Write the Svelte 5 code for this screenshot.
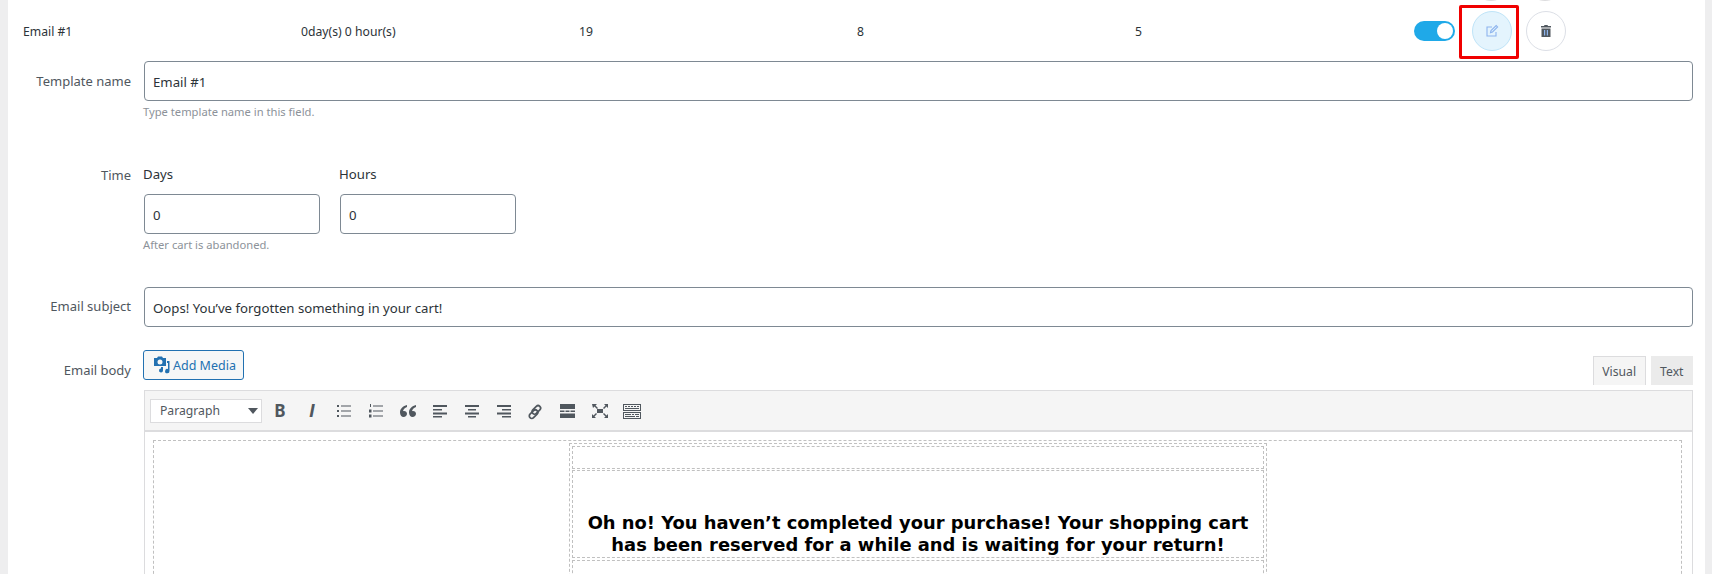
<script>
  const columns = ['Email #1', '0day(s) 0 hour(s)', '19', '8', '5'];
  const lists = [
    'M3 4h2v2H3zM7 4.500h10v1H7zM3 9h2v2H3zM7 9.500h10v1H7zM3 14h2v2H3zM7 14.500h10v1H7z',
    'M4 3h1v3H4zM7 4.500h10v1H7zM3 8.500h2.500v3H3zM7 9.500h10v1H7zM3 13.500h2.500v3H3zM7 14.500h10v1H7z'
  ];
  const aligns = [
    'M3 4h14v2H3zM3 8h9v1.500H3zM3 11.500h14v2H3zM3 15h9v1.500H3z',
    'M3 4h14v2H3zM6 8h8v1.500H6zM3 11.500h14v2H3zM6 15h8v1.500H6z',
    'M3 4h14v2H3zM8 8h9v1.500H8zM3 11.500h14v2H3zM8 15h9v1.500H8z'
  ];
</script>

<div class="page">
  <div class="prev left"></div>
  <div class="prev right"></div>

  <div class="row-head">
    {#each columns as col}
      <span>{col}</span>
    {/each}
    <div class="actions">
      <span class="toggle"><i></i></span>
      <span class="round edit">
        <svg viewBox="0 0 14 14" width="14" height="14" fill="none" stroke="#8db4ee" stroke-width="1.100">
          <path d="M11 8v4H2V3h5" />
          <path d="M5.500 8.600 6 6.600 11.200 1.500l1.400 1.400L7.500 8z" />
        </svg>
        <span class="marker"></span>
      </span>
      <span class="round">
        <svg viewBox="0 0 14 14" width="14" height="14">
          <path fill="#50575e" d="M5.500 1h3l.5 1h3v1.500H2V2h3zM2.500 4.500h9V13h-9z" />
          <path fill="#8db4ee" d="M5 6h1.200v5.500H5zM7.800 6H9v5.500H7.800z" />
        </svg>
      </span>
    </div>
  </div>

  <div class="field name">
    <label for="tpl">Template name</label>
    <div class="grow">
      <input id="tpl" class="box" value="Email #1" />
      <p class="hint">Type template name in this field.</p>
    </div>
  </div>

  <div class="field time">
    <span class="lbl">Time</span>
    <div>
      <div class="pair">
        <div class="unit">
          <span class="cap">Days</span>
          <input class="box" value="0" />
        </div>
        <div class="unit">
          <span class="cap">Hours</span>
          <input class="box" value="0" />
        </div>
      </div>
      <p class="hint">After cart is abandoned.</p>
    </div>
  </div>

  <div class="field subject">
    <label for="subj">Email subject</label>
    <div class="grow">
      <input id="subj" class="box" value="Oops! You’ve forgotten something in your cart!" />
    </div>
  </div>

  <div class="field body">
    <span class="lbl">Email body</span>
    <div class="grow">
      <div class="editor-top">
        <button class="media">
          <svg viewBox="0 0 18 18" width="18" height="18" fill="#2271b1">
            <path d="M1 2h3l1-1.500h4L10 2h3v8H1zm6 1.500a2.500 2.500 0 1 0 0 5 2.500 2.500 0 0 0 0-5z" />
            <path d="M14 5h2.500v10a2.200 2.200 0 1 1-1.500-2V7h-1zM8 11h2v3.500a2 2 0 1 1-1.500-2H8z" />
          </svg>
          Add Media
        </button>
        <div class="tabs">
          <span class="tab on">Visual</span>
          <span class="tab">Text</span>
        </div>
      </div>
      <div class="toolbar">
        <span class="select">Paragraph<i></i></span>
        <span class="tool bold">B</span>
        <span class="tool ital">I</span>
        {#each lists as d}
          <span class="tool"><svg viewBox="0 0 20 20" width="20" height="20" fill="#50575e"><path {d} /></svg></span>
        {/each}
        <span class="tool"><svg viewBox="0 0 20 20" width="20" height="20" fill="#50575e"><path d="M9 4C5 5 2 7.500 2 11.500 2 14 3.500 16 5.500 16S9 14.500 9 12.800 7.800 10 6 10c-.5 0-.8 0-1 .2C5.200 8.500 6.800 6.800 9 6zM18 4c-4 1-7 3.500-7 7.500 0 2.500 1.500 4.500 3.500 4.500s3.500-1.500 3.500-3.200-1.200-2.800-3-2.800c-.5 0-.8 0-1 .2.200-1.700 1.800-3.400 4-4.200z" /></svg></span>
        {#each aligns as d}
          <span class="tool"><svg viewBox="0 0 20 20" width="20" height="20" fill="#50575e"><path {d} /></svg></span>
        {/each}
        <span class="tool"><svg viewBox="0 0 20 20" width="20" height="20" fill="none" stroke="#50575e" stroke-width="1.700"><rect x="1.500" y="7.500" width="10" height="5" rx="2.500" transform="rotate(-45 6.500 10) translate(-1.500 3)" /><rect x="8.500" y="7.500" width="10" height="5" rx="2.500" transform="rotate(-45 13.500 10) translate(-1.500 -3)" /></svg></span>
        <span class="tool"><svg viewBox="0 0 20 20" width="20" height="20" fill="#50575e"><path d="M2 3h15v5H2zM2 9.500h4.500v1.500H2zM7.500 9.500h4v1.500h-4zM12.500 9.500H17v1.500h-4.500zM2 12.500h15V17H2z" /></svg></span>
        <span class="tool"><svg viewBox="0 0 20 20" width="20" height="20" fill="#50575e"><path d="M2 3h5L5.500 4.500 8 7 7 8 4.500 5.500 3 7zM18 3v4l-1.500-1.500L14 8l-1-1 2.500-2.500L14 3zM2 17v-4l1.500 1.500L6 12l1 1-2.500 2.500L6 17zM18 17h-4l1.500-1.500L13 13l1-1 2.500 2.500L18 13zM7 8h6v4H7z" /></svg></span>
        <span class="tool"><svg viewBox="0 0 20 20" width="20" height="20" fill="#50575e"><path d="M1 3h18v7H1zm1 1v5h16V4zM1 11h18v7H1zm1 1v5h16v-5zM3 5h2v1H3zM6 5h2v1H6zM9 5h2v1H9zM12 5h2v1h-2zM15 5h2v1h-2zM3 7h14v1H3zM3 13h6v1H3zM10 13h2v1h-2zM13 13h4v1h-4zM3 15h10v1H3zM14 15h3v1h-3z" /></svg></span>
      </div>
      <div class="content">
        <div class="outer">
          <div class="inner">
            <div class="cell blank"></div>
            <div class="cell msg">
              Oh no! You haven’t completed your purchase! Your shopping cart<br />has been reserved for a while and is waiting for your return!
            </div>
            <div class="cell rest"></div>
          </div>
        </div>
      </div>
    </div>
  </div>
</div>

<style>
  :global(body) {
    margin: 0;
    background: #eeeeef;
    overflow: hidden;
  }

  .page {
    position: relative;
    height: 574px;
    margin: 0 7px 0 8px;
    background: #fff;
    overflow: hidden;
    font-family: "Noto Sans", sans-serif;
    font-size: 13.200px;
    color: #2c3338;
  }

  .prev {
    position: absolute;
    top: -39px;
    width: 38px;
    height: 38px;
    border: 1px solid #dcdcde;
    border-radius: 50%;
  }
  .prev.left { left: 1463px; }
  .prev.right { left: 1517px; }

  .row-head {
    display: flex;
    align-items: center;
    height: 61px;
    padding: 0 0 0 15px;
  }
  .row-head > span {
    width: 278px;
    flex: none;
    padding-top: 2px;
    font-size: 12.200px;
  }

  .actions {
    display: flex;
    align-items: center;
    margin-left: 1px;
  }

  .toggle {
    display: flex;
    justify-content: flex-end;
    align-items: center;
    width: 41px;
    height: 20px;
    padding-right: 2px;
    box-sizing: border-box;
    background: #1fa9e8;
    border-radius: 10px;
  }
  .toggle i {
    width: 16px;
    height: 16px;
    background: #fff;
    border-radius: 50%;
  }

  .round {
    position: relative;
    display: flex;
    align-items: center;
    justify-content: center;
    width: 38px;
    height: 38px;
    margin-left: 14px;
    border: 1px solid #dcdfe6;
    border-radius: 50%;
  }
  .edit {
    margin-left: 17px;
    background: #e4f4fd;
    border-color: #bfe4f8;
  }

  .marker {
    position: absolute;
    left: -14px;
    top: -7px;
    width: 54px;
    height: 48px;
    border: 3px solid #f00000;
    border-radius: 2px;
  }

  .field {
    display: flex;
    padding-right: 12px;
  }
  .field label,
  .lbl {
    width: 123px;
    flex: none;
    margin-right: 13px;
    text-align: right;
    font-size: 13px;
    color: #50575e;
  }
  .grow { flex: 1; }

  .name { height: 105px; }
  .name label { padding-top: 11px; }
  .time { height: 121px; }
  .subject { height: 63px; }
  .subject label { padding-top: 10px; }
  .body .lbl { padding-top: 11px; }

  .box {
    display: block;
    width: 100%;
    height: 40px;
    padding: 2px 8px 0;
    box-sizing: border-box;
    border: 1px solid #7e8993;
    border-radius: 4px;
    background: #fff;
    font: inherit;
    color: #2c3338;
    outline: none;
  }

  .hint {
    margin: 3px 0 0 -1px;
    font-size: 11.200px;
    color: #8c9299;
  }

  .pair {
    display: flex;
    gap: 20px;
  }
  .unit { width: 176px; }
  .cap {
    display: block;
    height: 19px;
    margin: -1px 0 10px -1px;
    line-height: 18px;
  }

  .editor-top {
    display: flex;
    justify-content: space-between;
    align-items: flex-end;
    height: 40px;
  }

  .media {
    display: flex;
    align-items: center;
    gap: 2px;
    align-self: flex-start;
    height: 30px;
    padding: 0 7px 0 9px;
    margin-left: -1px;
    background: #f6f7f7;
    border: 1px solid #2271b1;
    border-radius: 3px;
    font: inherit;
    font-size: 12.500px;
    color: #2271b1;
  }

  .tabs {
    display: flex;
    gap: 5px;
    margin-bottom: 5px;
  }
  .tab {
    display: flex;
    align-items: center;
    height: 29px;
    padding: 0 8.500px;
    box-sizing: border-box;
    background: #ebebeb;
    font-size: 12.200px;
    color: #50575e;
    border: 1px solid #ebebeb;
    border-bottom: 0;
  }
  .tab.on {
    background: #f5f5f5;
    border-color: #dcdcde;
  }

  .toolbar {
    display: flex;
    align-items: center;
    height: 42px;
    padding-left: 5px;
    box-sizing: border-box;
    background: #f5f5f5;
    border: 1px solid #dcdcde;
    border-bottom: 2px solid #dcdcde;
  }

  .select {
    position: relative;
    display: flex;
    align-items: center;
    width: 112px;
    height: 24px;
    padding-left: 9px;
    margin-right: 2px;
    box-sizing: border-box;
    background: #fff;
    border: 1px solid #dcdcde;
    font-size: 12.200px;
    color: #50575e;
  }
  .select i {
    position: absolute;
    right: 3px;
    top: 8px;
    border: 5px solid transparent;
    border-top: 6px solid #50575e;
    border-bottom: 0;
  }

  .tool {
    display: flex;
    align-items: center;
    justify-content: center;
    width: 32px;
    height: 24px;
    flex: none;
    color: #50575e;
  }
  .bold {
    font-weight: 700;
    font-size: 17px;
  }
  .ital {
    font-style: italic;
    font-weight: 700;
    font-size: 19px;
    font-family: "Liberation Sans", sans-serif;
  }

  .content {
    height: 200px;
    padding: 8px 10px 0 8px;
    border-left: 1px solid #dcdcde;
    border-right: 1px solid #dcdcde;
  }

  .outer {
    height: 300px;
    padding: 2px 0 0 415px;
    border: 1px dashed #c0c0c0;
    box-sizing: border-box;
  }

  .inner {
    width: 698px;
    height: 300px;
    padding: 2px;
    box-sizing: border-box;
    border: 1px dashed #c0c0c0;
  }

  .cell {
    border: 1px dashed #c0c0c0;
    box-sizing: border-box;
  }
  .blank { height: 23px; margin-bottom: 1px; }
  .msg {
    height: 88px;
    margin-bottom: 2px;
    padding-top: 41px;
    text-align: center;
    font-family: "DejaVu Sans", sans-serif;
    font-weight: 700;
    font-size: 17.900px;
    line-height: 22px;
    color: #000;
  }
  .rest { height: 100px; }
</style>
